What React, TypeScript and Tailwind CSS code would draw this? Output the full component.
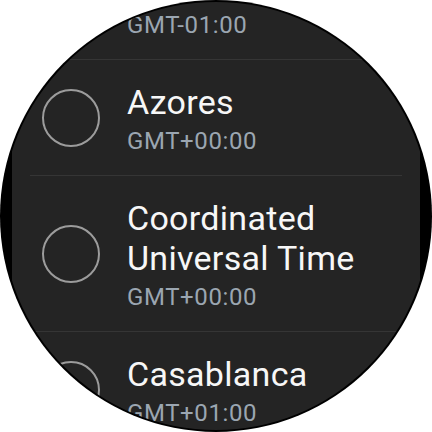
import React from "react";

type Zone = { name: string[]; offset: string };

const zones: Zone[] = [
  { name: ["Cape Verde"], offset: "GMT-01:00" },
  { name: ["Azores"], offset: "GMT+00:00" },
  { name: ["Coordinated", "Universal Time"], offset: "GMT+00:00" },
  { name: ["Casablanca"], offset: "GMT+01:00" },
];

function ZoneRow({ zone, last }: { zone: Zone; last: boolean }) {
  return (
    <div className={`${last ? "" : "border-b border-[#353535]"} flex items-center pl-3 pt-[22px] pb-[19px]`}>
      <div className="w-[58px] h-[58px] shrink-0 rounded-full border-2 border-[#9c9c9c] mb-[3px]" />
      <div className="ml-[27px] flex flex-col">
        {zone.name.map((line) => (
          <span key={line} className="text-[34px] leading-[40px] tracking-[0.3px] text-[#f7f7f7] whitespace-nowrap">
            {line}
          </span>
        ))}
        <span className="mt-1 text-[24px] leading-[30px] tracking-[0.6px] text-[#9ba6b1]">{zone.offset}</span>
      </div>
    </div>
  );
}

export default function App() {
  return (
    <div className="w-[432px] h-[432px] bg-white" style={{ fontFamily: "Roboto, 'Noto Sans', sans-serif" }}>
      <div className="w-[432px] h-[432px] rounded-full bg-black p-[2px]">
        <div className="w-full h-full rounded-full overflow-hidden flex justify-center">
          <div className="w-[408px] h-full bg-[#242424] overflow-hidden px-[18px]">
            {/* list scrolled a bit past the first entry */}
            <div className="-mt-[58px]">
              {zones.map((z, i) => (
                <ZoneRow key={z.offset + i} zone={z} last={i === zones.length - 1} />
              ))}
            </div>
          </div>
        </div>
      </div>
    </div>
  );
}
